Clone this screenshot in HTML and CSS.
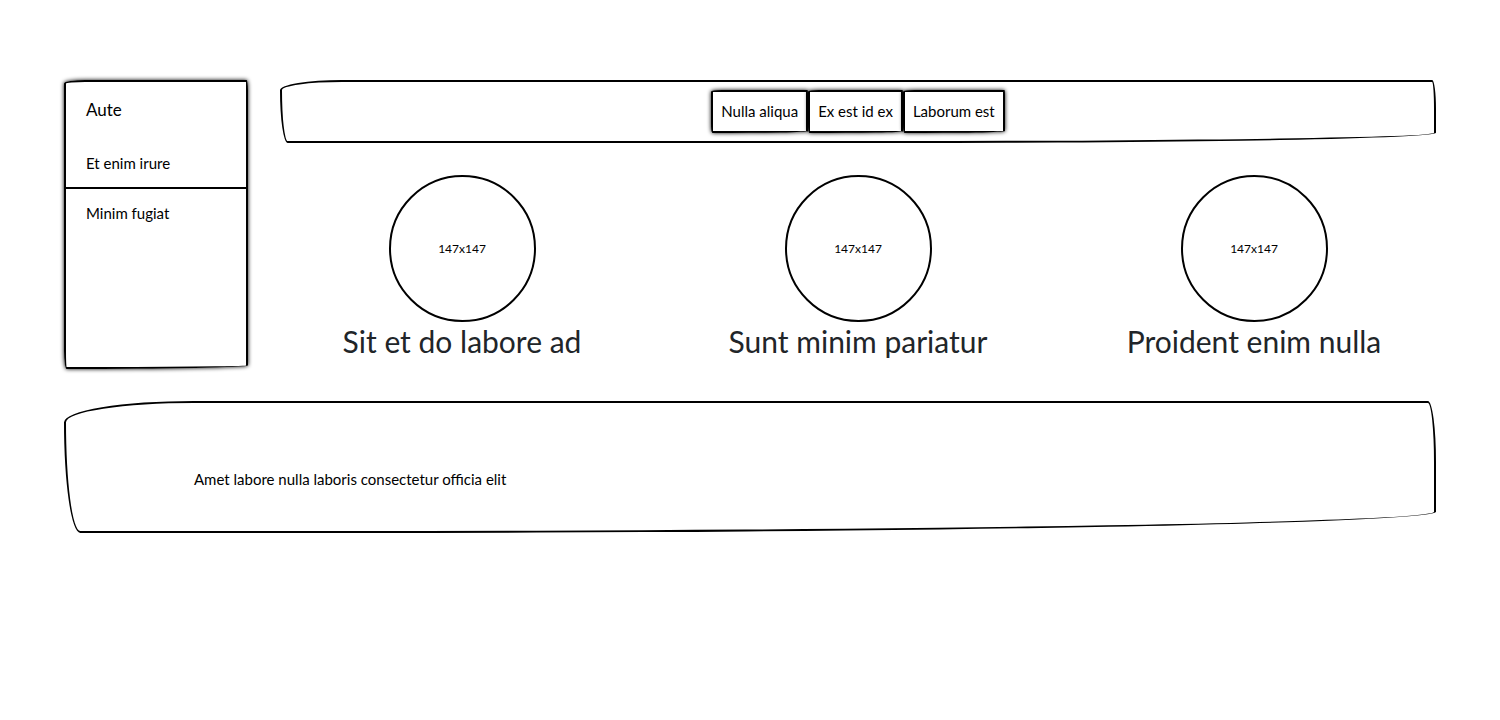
FILE: index.html
```html
<!DOCTYPE html>
<html lang="en">
<head>
<meta charset="utf-8">
<meta name="viewport" content="width=device-width, initial-scale=1">
<title>Aute</title>
<link rel="stylesheet" href="styles.css">
</head>
<body>
<div class="page">
  <aside class="sidebar sketch raised">
    <h2 class="sidebar-title">Aute</h2>
    <ul class="sidebar-list">
      <li class="sidebar-item">Et enim irure</li>
      <li class="sidebar-item">Minim fugiat</li>
    </ul>
  </aside>
  <div class="content">
    <nav class="toolbar sketch">
      <button type="button" class="button sketch raised">Nulla aliqua</button>
      <button type="button" class="button sketch raised">Ex est id ex</button>
      <button type="button" class="button sketch raised">Laborum est</button>
    </nav>
    <main class="cards">
      <section class="card">
        <div class="avatar">147x147</div>
        <h1 class="card-title">Sit et do labore ad</h1>
      </section>
      <section class="card">
        <div class="avatar">147x147</div>
        <h1 class="card-title">Sunt minim pariatur</h1>
      </section>
      <section class="card">
        <div class="avatar">147x147</div>
        <h1 class="card-title">Proident enim nulla</h1>
      </section>
    </main>
  </div>
  <footer class="footer sketch">
    <p class="footer-text">Amet labore nulla laboris consectetur officia elit</p>
  </footer>
</div>
</body>
</html>
```
FILE: styles.css
```css
* {
  box-sizing: border-box;
}

body {
  margin: 0;
  background: #fff;
  color: #000;
  font-family: Lato, "Liberation Sans", sans-serif;
  font-size: 15px;
  line-height: 24px;
}

h1, h2, p, ul {
  margin: 0;
  padding: 0;
  font-weight: 400;
}

.page {
  display: grid;
  grid-template-columns: 184px 1fr;
  gap: 32px;
  padding: 80px 64px;
}

/* Uneven corners give each box a hand-drawn outline */
.sketch {
  border: 2px solid #000;
  border-radius: 255px 16px 2200px 32px / 42px 120px 42px 218px;
}

.raised {
  box-shadow: 0 0 4px #000;
}

.sidebar-title {
  padding: 16px 20px;
  font-size: 17px;
}

.sidebar-list {
  list-style: none;
}

.sidebar-item {
  padding: 13px 20px 12px;
}

.sidebar-item + .sidebar-item {
  padding-top: 12px;
  border-top: 2px solid #000;
}

.content {
  display: flex;
  flex-direction: column;
  gap: 32px;
  min-width: 0;
}

.toolbar {
  display: flex;
  justify-content: center;
  padding: 8px;
}

.button {
  padding: 8px;
  background: #fff;
  color: #000;
  font: inherit;
  line-height: 23px;
}

.cards {
  display: grid;
  grid-template-columns: repeat(3, 1fr);
  gap: 32px;
}

.card {
  display: flex;
  flex-direction: column;
  align-items: center;
}

.avatar {
  display: grid;
  place-items: center;
  width: 147px;
  height: 147px;
  border: 2px solid #000;
  border-radius: 50%;
  font-size: 12px;
}

.card-title {
  padding-bottom: 8px;
  color: #212529;
  font-size: 30px;
  line-height: 39px;
  white-space: nowrap;
}

.footer {
  grid-column: 1 / -1;
  padding: 64px 128px 40px;
}
```
